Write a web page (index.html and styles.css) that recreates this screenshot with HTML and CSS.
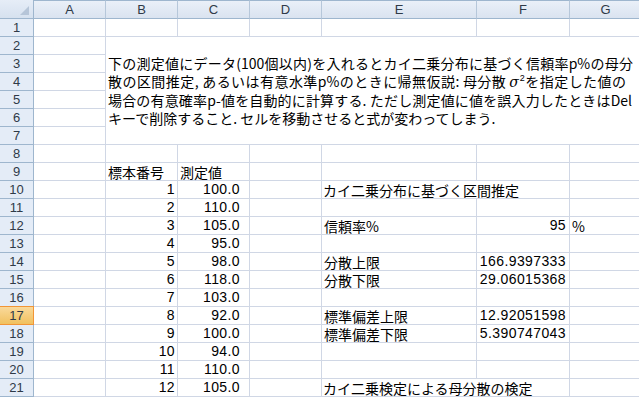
FILE: index.html
```html
<!DOCTYPE html>
<html lang="ja">
<head>
<meta charset="utf-8">
<title>母分散の区間推定</title>
<link rel="stylesheet" href="styles.css">
</head>
<body>
<div class="sheet">
  <div class="corner"><svg width="33" height="18" viewBox="0 0 33 18"><polygon points="29,6 29,15 20,15" fill="#b6c5d8"/></svg></div>
  <div class="ch">A</div><div class="ch">B</div><div class="ch">C</div><div class="ch">D</div><div class="ch">E</div><div class="ch">F</div><div class="ch">G</div>

  <div class="rh">1</div><div class="c"></div><div class="c"></div><div class="c"></div><div class="c"></div><div class="c"></div><div class="c"></div><div class="c"></div>
  <div class="rh">2</div><div class="c"></div>
  <div class="c merged">
    <div class="line l1">下の測定値にデータ(100個以内)を入れるとカイ二乗分布に基づく信頼率p%の母分</div>
    <div class="line l2">散の区間推定, あるいは有意水準p%のときに帰無仮説: 母分散<i class="sigma">σ</i><sup class="sq">2</sup>を指定した値の</div>
    <div class="line l3">場合の有意確率p-値を自動的に計算する. ただし測定値に値を誤入力したときはDel</div>
    <div class="line l4">キーで削除すること. セルを移動させると式が変わってしまう.</div>
  </div>
  <div class="rh">3</div><div class="c"></div>
  <div class="rh">4</div><div class="c"></div>
  <div class="rh">5</div><div class="c"></div>
  <div class="rh">6</div><div class="c"></div>
  <div class="rh">7</div><div class="c"></div>

  <div class="rh">8</div><div class="c"></div><div class="c"></div><div class="c"></div><div class="c"></div><div class="c"></div><div class="c"></div><div class="c"></div>
  <div class="rh">9</div><div class="c"></div><div class="c">標本番号</div><div class="c">測定値</div><div class="c"></div><div class="c"></div><div class="c"></div><div class="c"></div>
  <div class="rh">10</div><div class="c"></div><div class="c num">1</div><div class="c num val">100.0</div><div class="c"></div><div class="c wide">カイ二乗分布に基づく区間推定</div><div class="c"></div>
  <div class="rh">11</div><div class="c"></div><div class="c num">2</div><div class="c num val">110.0</div><div class="c"></div><div class="c"></div><div class="c"></div><div class="c"></div>
  <div class="rh">12</div><div class="c"></div><div class="c num">3</div><div class="c num val">105.0</div><div class="c"></div><div class="c">信頼率%</div><div class="c num res">95</div><div class="c">%</div>
  <div class="rh">13</div><div class="c"></div><div class="c num">4</div><div class="c num val">95.0</div><div class="c"></div><div class="c"></div><div class="c"></div><div class="c"></div>
  <div class="rh">14</div><div class="c"></div><div class="c num">5</div><div class="c num val">98.0</div><div class="c"></div><div class="c">分散上限</div><div class="c num res">166.9397333</div><div class="c"></div>
  <div class="rh">15</div><div class="c"></div><div class="c num">6</div><div class="c num val">118.0</div><div class="c"></div><div class="c">分散下限</div><div class="c num res">29.06015368</div><div class="c"></div>
  <div class="rh">16</div><div class="c"></div><div class="c num">7</div><div class="c num val">103.0</div><div class="c"></div><div class="c"></div><div class="c"></div><div class="c"></div>
  <div class="rh sel">17</div><div class="c"></div><div class="c num">8</div><div class="c num val">92.0</div><div class="c"></div><div class="c">標準偏差上限</div><div class="c num res">12.92051598</div><div class="c"></div>
  <div class="rh">18</div><div class="c"></div><div class="c num">9</div><div class="c num val">100.0</div><div class="c"></div><div class="c">標準偏差下限</div><div class="c num res">5.390747043</div><div class="c"></div>
  <div class="rh">19</div><div class="c"></div><div class="c num">10</div><div class="c num val">94.0</div><div class="c"></div><div class="c"></div><div class="c"></div><div class="c"></div>
  <div class="rh">20</div><div class="c"></div><div class="c num">11</div><div class="c num val">110.0</div><div class="c"></div><div class="c"></div><div class="c"></div><div class="c"></div>
  <div class="rh">21</div><div class="c"></div><div class="c num">12</div><div class="c num val">105.0</div><div class="c"></div><div class="c wide">カイ二乗検定による母分散の検定</div><div class="c"></div>
</div>
</body>
</html>
```

FILE: styles.css
```css
html, body {
  margin: 0;
  padding: 0;
  background: #ffffff;
  overflow: hidden;
}

.sheet {
  display: grid;
  grid-template-columns: 34px 72px 72px 72px 72px 155px 93px 72px;
  grid-template-rows: 19px repeat(21, 18px);
  width: 642px;
  font-family: "Noto Sans CJK JP", "Noto Sans", sans-serif;
  font-size: 14px;
  color: #000;
}

.corner,
.ch,
.rh {
  box-sizing: border-box;
  font-family: "Liberation Sans", Arial, sans-serif;
  font-size: 13px;
  color: #2f3a48;
  text-align: center;
}

.corner {
  background: linear-gradient(#e6edf7, #d6e1ef);
  border-right: 1px solid #9eb6ce;
  border-bottom: 1px solid #9eb6ce;
}

.corner svg {
  display: block;
}

.ch {
  background: linear-gradient(#eaf0f8, #dae3f0);
  border-top: 1px solid #9eb6ce;
  border-right: 1px solid #b6c7da;
  border-bottom: 1px solid #9eb6ce;
  line-height: 17px;
}

.rh {
  background: #e4ecf7;
  border-right: 1px solid #9eb6ce;
  border-bottom: 1px solid #9eb6ce;
  line-height: 17px;
}

.rh.sel {
  background: linear-gradient(#f9d99b, #f1c15f);
  border-right-color: #f29536;
  border-bottom-color: #f29536;
  box-shadow: 0 -1px 0 #f29536;
}

.c {
  box-sizing: border-box;
  border-right: 1px solid #d0d7e5;
  border-bottom: 1px solid #d0d7e5;
  padding: 1px 2px 0 2px;
  line-height: 16px;
  white-space: nowrap;
  min-width: 0;
}

.c.num {
  font-family: "Liberation Sans", Arial, sans-serif;
  font-size: 14px;
  letter-spacing: 0.4px;
  text-align: right;
  padding: 0 2px 0 2px;
  line-height: 17px;
}

.c.val {
  padding-right: 9px;
}

.c.res {
  padding-right: 3px;
}

.c.wide {
  grid-column: span 2;
  padding-left: 1px;
}

.merged {
  grid-column: 3 / span 6;
  grid-row: span 6;
  display: flex;
  flex-direction: column;
  justify-content: center;
  padding: 0 0 0 2px;
}

.line {
  line-height: 18px;
  white-space: nowrap;
  text-align: justify;
  text-align-last: justify;
}

.l1 { width: 525px; }
.l2 { width: 518px; }
.l3 { width: 524px; }
.l4 { text-align: left; text-align-last: left; }

.sigma {
  font-family: "DejaVu Serif", "Liberation Serif", serif;
  font-style: italic;
  padding: 0 1px 0 3px;
}

.sq {
  font-family: "Liberation Sans", Arial, sans-serif;
  font-size: 9px;
  line-height: 0;
  vertical-align: 6px;
}
```
